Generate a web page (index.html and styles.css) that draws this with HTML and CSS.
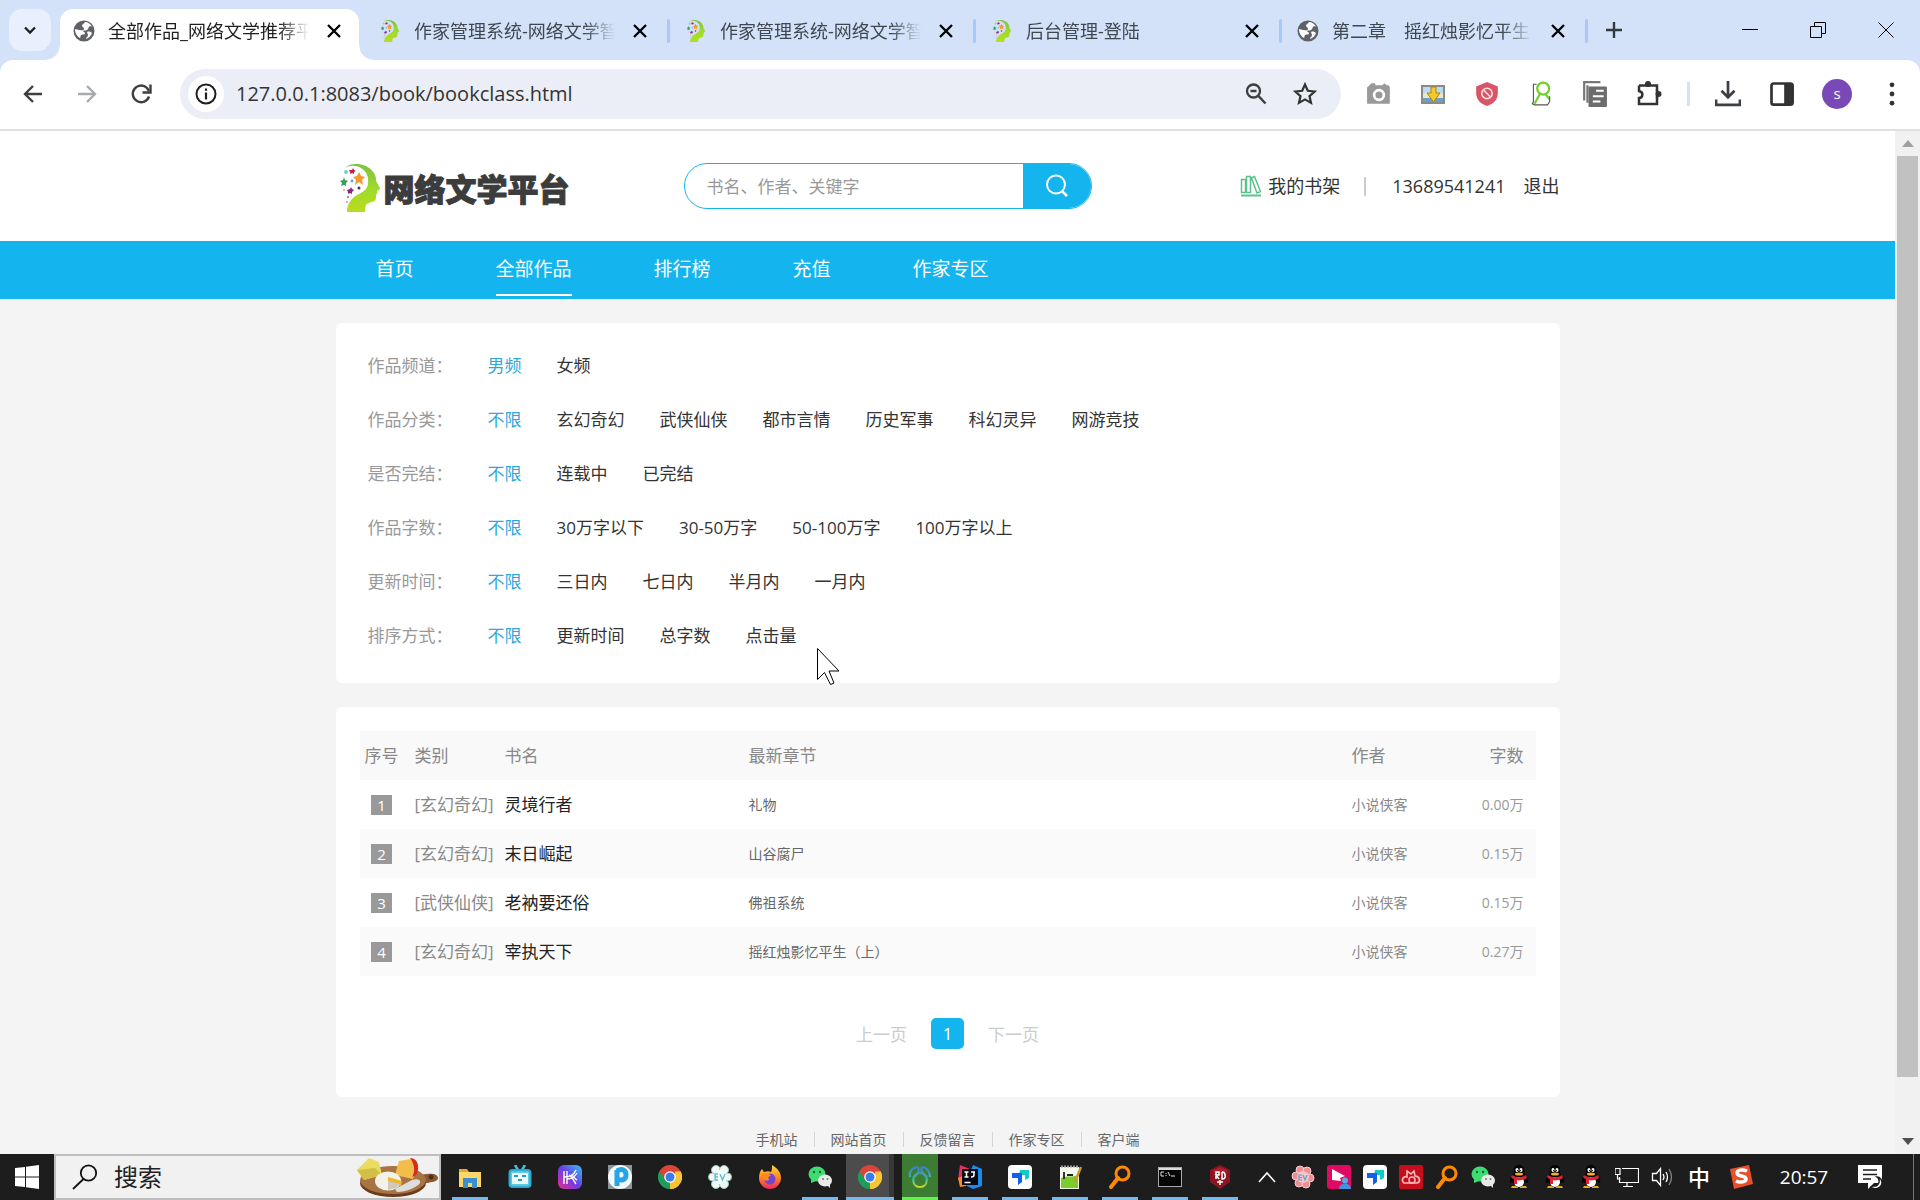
FILE: index.html
```html
<!DOCTYPE html>
<html lang="zh-CN">
<head>
<meta charset="utf-8">
<title>全部作品_网络文学推荐平台</title>
<link rel="stylesheet" href="styles.css">
</head>
<body>
<svg class="defs" aria-hidden="true">
  <defs>
    <linearGradient id="green" x1="0" y1="0" x2="0" y2="1"><stop offset="0" stop-color="#7cc243"/><stop offset=".5" stop-color="#9ddb2c"/><stop offset="1" stop-color="#b9dc1c"/></linearGradient>
    <linearGradient id="kgrad" x1="0" y1="1" x2="1" y2="0"><stop offset="0" stop-color="#ee2a8c"/><stop offset=".5" stop-color="#6a3fe8"/><stop offset="1" stop-color="#2fc4f5"/></linearGradient>
    <linearGradient id="fire" x1="0" y1="0" x2="0" y2="1"><stop offset="0" stop-color="#ffd93b"/><stop offset=".5" stop-color="#ff8a1e"/><stop offset="1" stop-color="#f0265f"/></linearGradient>
    <linearGradient id="knot" x1="0" y1="0" x2="0" y2="1"><stop offset="0" stop-color="#3f7fd0"/><stop offset=".6" stop-color="#3cb8a0"/><stop offset="1" stop-color="#c5d92e"/></linearGradient>
  </defs>
  <symbol id="head" viewBox="0 0 40 48">
    <path fill="url(#green)" d="M5 4C9 0 14 0 18 0c8 1 16 5 18 14v3l4 7c0 2-2 2-3 3 0 2 0 3-1 4 0 4 0 6-4 7-3 1-5 1-6 3-1 2-1 4-1 7H7c0-6 2-10 7-15 6-4 13-6 14-13 1-8-2-13-7-16C16 1 10 1 5 4z"/>
    <path fill="#f29a2e" d="M19 8l2 4 4 1-3 3 1 5-4-3-4 3 1-5-3-3 4-1z"/>
    <path fill="#37a05c" d="M4 13l1 3 3 1-2 2v3l-2-1-3 1 1-3-2-2 3-1z"/>
    <path fill="#c02548" d="M13 4l1 2 2 1-2 1v2l-2-1-2 1v-2l-1-2 3 0z"/>
    <path fill="#8d2386" d="M11 23l1 2 2 1-2 2v2l-2-1-2 1v-2l-1-2 3-1z"/>
    <circle cx="6" cy="8" r="2" fill="#66d4d4"/><circle cx="19" cy="24" r="1.500" fill="#4a3b45"/><circle cx="12" cy="17" r="1.400" fill="#59a8dc"/><circle cx="4" cy="26" r="1" fill="#e8a060"/><circle cx="8" cy="33" r="1" fill="#d04a68"/><circle cx="7" cy="38" r="1" fill="#e88"/>
  </symbol>
  <symbol id="globe" viewBox="0 0 22 22">
    <circle cx="11" cy="11" r="10.500" fill="#5f6368"/>
    <path fill="#fff" d="M12 2c-1 2-3 2-3 4 0 1 2 1 2 3 0 2-3 1-5 1-1 0-3-1-4-1 0 5 3 8 5 9 1-1 0-2 1-3 2-1 4 0 4-2 0-1-2-1-2-2 1-1 4 0 5-2 1-1 0-2 2-3 1 0 2 1 2 1-1-3-4-5-7-5z"/>
    <path fill="#fff" d="M14 12c2-1 4 0 5 1-1 3-3 5-6 6 0-2 2-2 2-4 0-1-1-2-1-3z"/>
  </symbol>
  <symbol id="close" viewBox="0 0 24 24"><path d="M6 6l12 12M18 6L6 18" fill="none" stroke="currentColor" stroke-width="2.300"/></symbol>
  <symbol id="chrome" viewBox="0 0 24 24">
    <path fill="#db4437" d="M12 12L1.600 6A12 12 0 0 1 22.400 6z"/><path fill="#f9c534" d="M12 12L22.400 6A12 12 0 0 1 12 24z"/><path fill="#1c9e5a" d="M12 12V24A12 12 0 0 1 1.600 6z"/>
    <path fill="#db4437" d="M1.600 6l5 8L12 6.500h10.600L22.400 6z"/><path fill="#f9c534" d="M12 24l5.500-9L17 6.500h5.600A12 12 0 0 1 12 24z"/>
    <circle cx="12" cy="12" r="5.800" fill="#fff"/><circle cx="12" cy="12" r="4.500" fill="#3b7de8"/>
  </symbol>
  <symbol id="wechat" viewBox="0 0 24 24">
    <ellipse cx="9" cy="9" rx="8.500" ry="7.500" fill="#3fdc73"/><path fill="#3fdc73" d="M3 14l0 4 5-2z"/><circle cx="6" cy="7" r="1.200" fill="#146c35"/><circle cx="12" cy="7" r="1.200" fill="#146c35"/>
    <ellipse cx="17" cy="15.500" rx="7" ry="6" fill="#e9e9e9"/><path fill="#e9e9e9" d="M19 20l3 3 0-5z"/><circle cx="15" cy="14" r="1" fill="#777"/><circle cx="19.500" cy="14" r="1" fill="#777"/>
  </symbol>
  <symbol id="tdoc" viewBox="0 0 24 24">
    <rect width="24" height="24" rx="4" fill="#fff"/><path fill="#15c9c4" d="M12 5h9v8l-4 2v-5h-6z"/><path fill="#1260f0" d="M4 8h10v9l-4 3v-7H4z"/>
  </symbol>
  <symbol id="finder" viewBox="0 0 24 24"><circle cx="14.500" cy="8.500" r="6.500" fill="none" stroke="#ff8a00" stroke-width="3"/><path d="M10 13l-7 9" stroke="#ff8a00" stroke-width="4" stroke-linecap="round"/></symbol>
  <symbol id="penguin" viewBox="0 0 24 24">
    <path fill="#f2a51c" d="M5 21h6v2H4zM13 21h6l1 2h-7z"/><path fill="#050505" d="M12 0c-4 0-6 3-5 8-3 3-5 7-4 10l3-1c1 3 3 5 6 5s5-2 6-5l3 1c1-3-1-7-4-10 1-5-1-8-5-8z"/>
    <ellipse cx="12" cy="17" rx="5" ry="5" fill="#fff"/><path fill="#df2334" d="M5 10c5 3 9 3 14 0l1 3c-3 2-8 3-10 2v4H7v-5c-1 0-2-1-3-2z"/><ellipse cx="10" cy="5" rx="1.500" ry="2" fill="#fff"/><ellipse cx="14" cy="5" rx="1.500" ry="2" fill="#fff"/><circle cx="10.500" cy="5.500" r=".6"/><circle cx="13.500" cy="5.500" r=".6"/><ellipse cx="12" cy="9" rx="4" ry="1.500" fill="#f6ae20"/>
  </symbol>
</svg>

<header class="browser">
  <div class="tabstrip">
    <button class="tab-search" aria-label="搜索标签页"><svg width="16" height="16" viewBox="0 0 16 16"><path d="M3 5.500l5 5 5-5" fill="none" stroke="#1f1f1f" stroke-width="2.300"/></svg></button>
    <div class="tab active"><svg class="favicon"><use href="#globe"/></svg><span class="tab-title">全部作品_网络文学推荐平台</span><button class="tab-close" aria-label="关闭"><svg><use href="#close"/></svg></button></div>
    <span class="tab-sep hidden"></span>
    <div class="tab"><svg class="favicon"><use href="#head"/></svg><span class="tab-title">作家管理系统-网络文学智能平台</span><button class="tab-close" aria-label="关闭"><svg><use href="#close"/></svg></button></div>
    <span class="tab-sep"></span>
    <div class="tab"><svg class="favicon"><use href="#head"/></svg><span class="tab-title">作家管理系统-网络文学智能平台</span><button class="tab-close" aria-label="关闭"><svg><use href="#close"/></svg></button></div>
    <span class="tab-sep"></span>
    <div class="tab"><svg class="favicon"><use href="#head"/></svg><span class="tab-title">后台管理-登陆</span><button class="tab-close" aria-label="关闭"><svg><use href="#close"/></svg></button></div>
    <span class="tab-sep"></span>
    <div class="tab"><svg class="favicon"><use href="#globe"/></svg><span class="tab-title">第二章　摇红烛影忆平生</span><button class="tab-close" aria-label="关闭"><svg><use href="#close"/></svg></button></div>
    <span class="tab-sep"></span>
    <button class="new-tab" aria-label="新标签页"><svg width="18" height="18" viewBox="0 0 18 18"><path d="M9 1v16M1 9h16" stroke="#333b40" stroke-width="2.400"/></svg></button>
    <div class="window-controls">
      <button aria-label="最小化"><svg width="16" height="16" viewBox="0 0 16 16"><path d="M0 7.500h16" stroke="#000"/></svg></button>
      <button aria-label="还原"><svg width="16" height="16" viewBox="0 0 16 16"><path d="M.5 4.500h11v11H.5zM4.500 4V.5h11v11H12" fill="none" stroke="#000"/></svg></button>
      <button aria-label="关闭窗口"><svg width="16" height="16" viewBox="0 0 16 16"><path d="M.5.5l15 15M15.500.5l-15 15" stroke="#000"/></svg></button>
    </div>
  </div>
  <div class="toolbar">
    <div class="nav-buttons">
      <button aria-label="后退"><svg width="24" height="24" viewBox="0 0 24 24"><path d="M21 12H5M12 4l-8 8 8 8" fill="none" stroke="#3c4043" stroke-width="2.400"/></svg></button>
      <button aria-label="前进"><svg width="24" height="24" viewBox="0 0 24 24"><path d="M3 12h16M12 4l8 8-8 8" fill="none" stroke="#a8abae" stroke-width="2.400"/></svg></button>
      <button aria-label="重新加载"><svg width="24" height="24" viewBox="0 0 24 24"><path d="M20 14.500A8.300 8.300 0 1 1 18 6l2 3" fill="none" stroke="#3c4043" stroke-width="2.400"/><path d="M21.500 2.500v8h-8" fill="none" stroke="#3c4043" stroke-width="2.400"/></svg></button>
    </div>
    <div class="address">
      <span class="site-info"><svg width="22" height="22" viewBox="0 0 22 22"><circle cx="11" cy="11" r="9.500" fill="none" stroke="#1f1f1f" stroke-width="2"/><path d="M11 9.500v7M11 5.500v2.300" stroke="#1f1f1f" stroke-width="2.200"/></svg></span>
      <input class="url" aria-label="地址" value="127.0.0.1:8083/book/bookclass.html">
      <svg width="24" height="24" viewBox="0 0 24 24"><circle cx="9.500" cy="9" r="6.500" fill="none" stroke="#3c4043" stroke-width="2.300"/><path d="M14.500 14l7 7.500M6.500 9h6" stroke="#3c4043" stroke-width="2.500"/></svg>
      <svg width="26" height="26" viewBox="0 0 26 26"><path d="M13 3.500l2.800 6.300 6.800.7-5.100 4.600 1.500 6.800-6-3.500-6 3.500 1.500-6.800-5.100-4.600 6.800-.7z" fill="none" stroke="#333" stroke-width="2.200"/></svg>
    </div>
    <div class="extensions">
      <svg viewBox="0 0 24 24"><path fill="#999" d="M2 5l3-3h3l1 2h6l2-2 2 2h2l1 2v15H1V6z"/><circle cx="12" cy="13" r="4.500" fill="#999" stroke="#fff" stroke-width="2.500"/></svg>
      <svg viewBox="0 0 26 24"><rect x="1" y="3" width="24" height="19" fill="#8a8a86"/><rect x="3" y="5" width="20" height="15" fill="#b9dcf0"/><path fill="#ece7bd" d="M3 12c5-3 13 1 20-1v9H3z"/><path fill="#6aa0cc" d="M3 16h20v4H3z"/><path fill="#f3c92b" stroke="#a98512" d="M11 5h5v6h4l-6.500 9L7 11h4z"/></svg>
      <svg viewBox="0 0 24 24"><path fill="#d95565" d="M12 1l10 4v6c0 6-4 10-10 12C6 21 2 17 2 11V5z"/><circle cx="12" cy="11.500" r="4.800" fill="none" stroke="#fbdfe2" stroke-width="1.500"/><path d="M9 8.500l6 6" stroke="#fbdfe2" stroke-width="1.500"/></svg>
      <svg viewBox="0 0 24 24"><circle cx="14" cy="7" r="5.500" fill="none" stroke="#6fce28" stroke-width="2"/><path d="M11 12l-5 9M16 12l4 5" fill="none" stroke="#6fce28" stroke-width="2"/><path d="M8 3H5v16l-1 2 2 1h12l2-3v-5" fill="none" stroke="#555"/></svg>
      <svg viewBox="0 0 24 24"><path fill="none" stroke="#777" stroke-width="2" d="M2 18V1h15M5 20V4"/><rect x="6" y="5" width="17" height="19" rx="1" fill="#6c6c6c"/><path d="M13 9h7M10 14h10M10 19h7" stroke="#fff" stroke-width="1.800"/></svg>
      <svg viewBox="0 0 26 26"><path fill="none" stroke="#333" stroke-width="2.500" d="M3 4.500h18v5.500M21 16v7H3v-6c4 0 5-6 0-7V4.500"/><path d="M21 9v8" stroke="#333" stroke-width="2.500"/><circle cx="12" cy="3" r="3" fill="#333"/><circle cx="22.500" cy="13" r="3" fill="#333"/></svg>
      <i class="toolbar-sep"></i>
      <svg viewBox="0 0 24 24"><path fill="none" stroke="#3c4043" stroke-width="2.500" d="M12 0v14M6 9l6 6 6-6M1 17v5h22v-5"/></svg>
      <svg viewBox="0 0 24 24"><rect x="2.300" y="2.300" width="19.500" height="19.500" rx="2" fill="none" stroke="#333" stroke-width="2.500"/><path fill="#333" d="M14 2h8v20h-8z"/></svg>
      <span class="avatar">s</span>
      <svg viewBox="0 0 24 24" fill="#333"><circle cx="12" cy="3.500" r="2.200"/><circle cx="12" cy="12" r="2.200"/><circle cx="12" cy="20.500" r="2.200"/></svg>
    </div>
  </div>
</header>

<div class="viewport">
  <div class="site">
    <div class="site-header">
      <div class="container header-row">
        <a class="logo" href="#"><svg class="logo-mark"><use href="#head"/></svg><span>网络文学平台</span></a>
        <form class="search">
          <input type="text" aria-label="搜索" placeholder="书名、作者、关键字">
          <button type="button" aria-label="搜索"><svg width="24" height="24" viewBox="0 0 24 24"><circle cx="11" cy="10.500" r="9" fill="none" stroke="#fff" stroke-width="2"/><path d="M17 17l5 5" stroke="#fff" stroke-width="2.500"/></svg></button>
        </form>
        <div class="user">
          <a class="shelf" href="#"><svg width="22" height="22" viewBox="0 0 22 22"><path fill="none" stroke="#5cc08a" stroke-width="1.500" d="M1.500 4.500h4v13h-4zM6.500 1.500h4v16h-4zM11.500 3l3-1.500 6 15-3.500 1.500z"/><path fill="none" stroke="#5cc08a" stroke-width="2" d="M1 20.500h20"/></svg>我的书架</a>
          <i class="user-sep"></i>
          <a href="#">13689541241</a>
          <a href="#">退出</a>
        </div>
      </div>
    </div>
    <nav class="site-nav">
      <div class="container nav-row">
        <a href="#">首页</a><a href="#" class="current">全部作品</a><a href="#">排行榜</a><a href="#">充值</a><a href="#">作家专区</a>
      </div>
    </nav>
    <main class="container">
      <section class="card filters">
        <dl><dt>作品频道：</dt><dd><a class="on" href="#">男频</a><a href="#">女频</a></dd></dl>
        <dl><dt>作品分类：</dt><dd><a class="on" href="#">不限</a><a href="#">玄幻奇幻</a><a href="#">武侠仙侠</a><a href="#">都市言情</a><a href="#">历史军事</a><a href="#">科幻灵异</a><a href="#">网游竞技</a></dd></dl>
        <dl><dt>是否完结：</dt><dd><a class="on" href="#">不限</a><a href="#">连载中</a><a href="#">已完结</a></dd></dl>
        <dl><dt>作品字数：</dt><dd><a class="on" href="#">不限</a><a href="#">30万字以下</a><a href="#">30-50万字</a><a href="#">50-100万字</a><a href="#">100万字以上</a></dd></dl>
        <dl><dt>更新时间：</dt><dd><a class="on" href="#">不限</a><a href="#">三日内</a><a href="#">七日内</a><a href="#">半月内</a><a href="#">一月内</a></dd></dl>
        <dl><dt>排序方式：</dt><dd><a class="on" href="#">不限</a><a href="#">更新时间</a><a href="#">总字数</a><a href="#">点击量</a></dd></dl>
      </section>
      <section class="card list">
        <table>
          <colgroup><col class="c-rank"><col class="c-type"><col class="c-name"><col><col class="c-author"><col class="c-count"></colgroup>
          <thead><tr><th class="rank">序号</th><th>类别</th><th>书名</th><th>最新章节</th><th>作者</th><th class="count">字数</th></tr></thead>
          <tbody>
            <tr><td class="rank"><b>1</b></td><td class="type"><a href="#">[玄幻奇幻]</a></td><td class="name"><a href="#">灵境行者</a></td><td class="chapter"><a href="#">礼物</a></td><td class="author"><a href="#">小说侠客</a></td><td class="count">0.00万</td></tr>
            <tr><td class="rank"><b>2</b></td><td class="type"><a href="#">[玄幻奇幻]</a></td><td class="name"><a href="#">末日崛起</a></td><td class="chapter"><a href="#">山谷腐尸</a></td><td class="author"><a href="#">小说侠客</a></td><td class="count">0.15万</td></tr>
            <tr><td class="rank"><b>3</b></td><td class="type"><a href="#">[武侠仙侠]</a></td><td class="name"><a href="#">老衲要还俗</a></td><td class="chapter"><a href="#">佛祖系统</a></td><td class="author"><a href="#">小说侠客</a></td><td class="count">0.15万</td></tr>
            <tr><td class="rank"><b>4</b></td><td class="type"><a href="#">[玄幻奇幻]</a></td><td class="name"><a href="#">宰执天下</a></td><td class="chapter"><a href="#">摇红烛影忆平生（上）</a></td><td class="author"><a href="#">小说侠客</a></td><td class="count">0.27万</td></tr>
          </tbody>
        </table>
        <div class="pager"><a href="#">上一页</a><b>1</b><a href="#">下一页</a></div>
      </section>
    </main>
    <footer class="site-footer"><a href="#">手机站</a><i></i><a href="#">网站首页</a><i></i><a href="#">反馈留言</a><i></i><a href="#">作家专区</a><i></i><a href="#">客户端</a></footer>
  </div>
  <div class="scrollbar"><span class="arrow up"></span><span class="thumb"></span><span class="rest"></span><span class="arrow down"></span></div>
</div>

<div class="taskbar">
  <button class="start" aria-label="开始"><svg width="24" height="24" viewBox="0 0 24 24" fill="#fff"><path d="M0 3l10-1v9.500H0zM11 1.800L24 0v11.500H11zM0 12.500h10V22L0 21zM11 12.500h13V24l-13-1.800z"/></svg></button>
  <label class="task-search">
    <svg width="26" height="26" viewBox="0 0 26 26"><circle cx="16.500" cy="9" r="7.700" fill="none" stroke="#111" stroke-width="1.800"/><path d="M11.500 15L1 25" stroke="#111" stroke-width="1.800"/></svg>
    <input type="text" aria-label="搜索" placeholder="搜索">
    <svg width="81" height="39" viewBox="0 0 81 39"><path fill="#8a5a33" d="M60 17l10-1c5-1 11 0 11 4s-7 4-11 5l-6 1z"/><ellipse cx="36" cy="25" rx="33" ry="14" fill="#6a3d1e"/><ellipse cx="36" cy="22" rx="33" ry="14" fill="#a87444"/><circle cx="74" cy="19" r="2.500" fill="#53301a"/><path fill="#eadb62" d="M0 12L12 0l10 4 3 13-18 5z"/><path fill="#d3bf45" d="M0 12l18-2 7 7-18 5z"/><path fill="#f3bd4c" d="M42 3l12-2 7 5-5 15-18-4z"/><path fill="#d42c1d" d="M53 0c9 0 10 12 6 17l-4 2c4-6 2-14-2-19z"/><ellipse cx="31" cy="23" rx="13" ry="9.500" fill="#f4f1e8"/><path fill="#eab92c" d="M31 19l14 4-1 5-13-3z"/><path fill="#cfc8bc" d="M31 23v9l8-2 4-4z"/><path fill="#ddd" d="M38 31l17-9c6-2 9 0 8 3-2 4-14 9-23 9z"/></svg>
  </label>
  <div class="apps">
    <button aria-label="文件资源管理器" class="run"><svg viewBox="0 0 24 24"><path fill="#e6a92a" d="M1 4h8l2 3h12v4H1z"/><path fill="#fbd668" d="M1 7h22v15H1z"/><path fill="#3b8ed0" d="M5 13h14v10h-5v-5h-4v5H5z"/></svg></button>
    <button aria-label="视频"><svg viewBox="0 0 24 24"><path d="M7 0l3 5M17 0l-3 5" stroke="#46bfdf" stroke-width="2.500"/><rect x="1.500" y="5" width="21" height="17" rx="3" fill="#5ec9e4" stroke="#2ba8cd" stroke-width="2"/><rect x="4" y="8" width="16" height="11" rx="1" fill="#eafaff"/><path d="M6 11h4M14 11h4M10 15h4" stroke="#2b9cc0" stroke-width="1.800"/></svg></button>
    <button aria-label="K"><svg viewBox="0 0 24 24"><rect width="24" height="24" rx="6" fill="url(#kgrad)"/><path d="M6 6v13M9 6v13M18 5c-2 5-7 7-12 7M19 8c-3 5-6 6-10 6M11 10c3 1 4 5 7 9M14 10c2 2 3 4 5 5" fill="none" stroke="#fff" stroke-width="1.400"/></svg></button>
    <button aria-label="P"><svg viewBox="0 0 24 24"><rect width="24" height="24" fill="#8d959b"/><circle cx="12" cy="12" r="12" fill="#f2fbff"/><path d="M9 21V5M9 6c5-3 9-1 9 4s-5 6-8 4" fill="none" stroke="#23a5e8" stroke-width="5"/></svg></button>
    <button aria-label="Chrome"><svg><use href="#chrome"/></svg></button>
    <button aria-label="EV"><svg viewBox="0 0 24 24"><g fill="#eef8f5" stroke="#9bc7b5"><circle cx="8" cy="5" r="4.500"/><circle cx="16" cy="5" r="4.500"/><circle cx="4.500" cy="12" r="4"/><circle cx="19.500" cy="12" r="4"/><circle cx="8" cy="19" r="4.500"/><circle cx="16" cy="19" r="4.500"/></g><circle cx="12" cy="12" r="7" fill="#f7fffc"/><path d="M10 9H7v6h3M7 12h3M12 9l2.500 6L17 9" fill="none" stroke="#5db7d0" stroke-width="1.300"/></svg></button>
    <button aria-label="Firefox"><svg viewBox="0 0 24 24"><path fill="url(#fire)" d="M14 0c5 3 9 7 9 13A11 11 0 0 1 1 13C1 9 2 6 4 4l2 3c3-1 5-1 7 0 1-2 1-4 1-7z"/><circle cx="12" cy="14" r="5.500" fill="#7544cf"/><path fill="#ff8a1e" d="M4 9c4-2 7-1 9 2-3 0-3 2-2 4-4 2-7-2-7-6z"/></svg></button>
    <button aria-label="微信" class="run"><svg><use href="#wechat"/></svg></button>
    <button aria-label="Chrome" class="run current"><svg><use href="#chrome"/></svg></button>
    <button aria-label="Navicat" class="alert"><svg viewBox="0 0 24 24"><path fill="none" stroke="url(#knot)" stroke-width="2.200" d="M10 2C4 2 1 7 2 12M10 2c2 3 0 7-4 10M14 2c4 0 8 4 8 10M14 2c-2 3 1 7 5 10M12 8c-9 0-9 14 0 14s9-14 0-14z"/></svg></button>
    <button aria-label="IntelliJ IDEA" class="run"><svg viewBox="0 0 24 24"><path fill="#e72d68" d="M2 0l10 4-4 9-8 2z"/><path fill="#f68a2c" d="M0 13l8-3v11l-6 1z"/><path fill="#1a8cf0" d="M15 0l9 4v17l-9 3-8-4z"/><rect x="4" y="4" width="16" height="16" fill="#0a0a12"/><path d="M6.500 7h4M8.500 7v5M6.500 12h4M13 7h4M16 7v3q0 2-3 2M6.500 17.500h6" fill="none" stroke="#fff" stroke-width="1.500"/></svg></button>
    <button aria-label="腾讯文档" class="run"><svg><use href="#tdoc"/></svg></button>
    <button aria-label="记事本" class="run"><svg viewBox="0 0 24 24"><rect x="2" y="2" width="19" height="22" fill="#f4f7ea"/><path fill="#7bcc2c" d="M3 13c6-3 11 0 17-3v13H3z"/><path d="M3 1.500h17" stroke="#999" stroke-width="2" stroke-dasharray="2 1"/><path d="M6 7v7M9 10h6" stroke="#222" stroke-width="1.800"/><path d="M23 2l-6 15" stroke="#c99a2e" stroke-width="2.500"/></svg></button>
    <button aria-label="Everything" class="run"><svg><use href="#finder"/></svg></button>
    <button aria-label="命令提示符" class="run"><svg viewBox="0 0 24 24"><rect x=".5" y="2.500" width="23" height="19" fill="#050505" stroke="#aaa"/><path d="M1 4h22" stroke="#ddd" stroke-width="2"/><path d="M6 7H3v4h3M8 8v1M8 10v1M10 7l2 4M13 11h4" fill="none" stroke="#ddd"/></svg></button>
    <button aria-label="RD" class="run"><svg viewBox="0 0 24 24"><path fill="#8c1420" d="M12 0l10 5v12l-10 7-10-7V5z"/><path fill="#b51e2c" d="M12 2l8 4-8 4-8-4z"/><path d="M8 14V7h3v3H8l3 4M14 7v7q4 0 3-4 0-3-3-3M12 15v5M9 17h6" fill="none" stroke="#fff" stroke-width="1.500"/></svg></button>
  </div>
  <div class="tray">
    <svg viewBox="0 0 24 24"><path d="M4 17l8-9 8 9" fill="none" stroke="#fff" stroke-width="1.600"/></svg>
    <svg viewBox="0 0 24 24"><g fill="#f08d90" stroke="#f8cdcc"><circle cx="9" cy="5" r="4"/><circle cx="16" cy="6" r="4"/><circle cx="5" cy="11" r="4"/><circle cx="19" cy="13" r="4"/><circle cx="8" cy="18" r="4"/><circle cx="15" cy="19" r="4"/></g><circle cx="12" cy="12" r="6" fill="#f5c6c8"/><path d="M11 10H8v5h3M8 12.500h3M12 10l2 5 2-5" fill="none" stroke="#5aa3cf" stroke-width="1.200"/></svg>
    <svg viewBox="0 0 24 24"><rect width="24" height="24" rx="3" fill="#df0b63"/><path fill="#fff" d="M5 4l13 7-5 2 1 3-9-1z"/><circle cx="18" cy="15.500" r="3" fill="#55a9e8"/><path fill="#3f94db" d="M12 24c0-7 12-7 12 0z"/></svg>
    <svg><use href="#tdoc"/></svg>
    <svg viewBox="0 0 24 24"><rect width="24" height="24" rx="2" fill="#c60d1b"/><path d="M4 17c-2-4 2-6 4-5V6l4 3 3-3 1 5c5 0 6 6 2 7H5z" fill="none" stroke="#ffb8b8" stroke-width="1.600"/><circle cx="13" cy="15" r="3" fill="none" stroke="#ffb8b8" stroke-width="1.500"/></svg>
    <svg><use href="#finder"/></svg>
    <svg><use href="#wechat"/></svg>
    <svg><use href="#penguin"/></svg>
    <svg><use href="#penguin"/></svg>
    <svg><use href="#penguin"/></svg>
    <svg viewBox="0 0 24 24"><path d="M7 3.500h16.500v14H4.500V12M0 3.500h5v6H0zM2.500 10v4h3M12 18v3M8 21.500h10" fill="none" stroke="#fff" stroke-width="1.200"/></svg>
    <svg viewBox="0 0 24 24"><path d="M1.500 8.500h4l4-5v17l-4-5h-4zM12 9q2 3 0 6M15 7q3 5 0 10" fill="none" stroke="#fff" stroke-width="1.300"/><path d="M18 4q5 8 0 16" fill="none" stroke="#888" stroke-width="1.300"/></svg>
    <span class="ime">中</span>
    <svg class="sogou" viewBox="0 0 24 24"><path fill="#e8502b" d="M1 4l19-4 4 19-19 5z"/><path d="M18 6c-5-2-10-1-10 2 0 4 9 2 9 6 0 3-6 4-10 2" fill="none" stroke="#fff" stroke-width="3.500"/></svg>
    <time>20:57</time>
    <svg class="notice" viewBox="0 0 24 24"><path fill="#fff" d="M0 0h24v18h-8l-6 6v-6H0z"/><path d="M5 5h14M5 9.500h14M5 14h8" stroke="#1d1d1d" stroke-width="1.500"/><path fill="#fff" stroke="#1d1d1d" stroke-width="1.500" d="M19 12c4 3 2 10-4 9l-2 1c3 3 10 2 11-4 0-3-2-6-5-6z"/></svg>
    <i class="show-desktop"></i>
  </div>
</div>
<svg class="cursor" width="24" height="38" viewBox="0 0 24 38"><path d="M.5.500v31l7-7 6 12 3.500-1.500-5-12h10z" fill="#fff" stroke="#000"/></svg>
</body>
</html>
```
FILE: styles.css
```css
* { box-sizing: border-box; }
html, body { height: 100%; }
body {
  margin: 0;
  display: grid;
  grid-template-rows: auto minmax(0, 1fr) auto;
  overflow: hidden;
  font-family: "Open Sans", "Noto Sans CJK SC", sans-serif;
  font-size: 17px;
  color: #333;
}
a { color: inherit; text-decoration: none; }
button { border: 0; padding: 0; background: none; display: flex; align-items: center; justify-content: center; }
input { border: 0; outline: 0; background: none; font: inherit; min-width: 0; }
svg { flex: none; display: block; }
.defs { position: absolute; width: 0; height: 0; }

/* browser frame */
.browser { background: #d3e2f9; }
.tabstrip { display: flex; height: 60px; padding: 9px 9px 0; }
.tab-search { width: 42px; height: 42px; margin-right: 9px; border-radius: 13px; background: #e8f0fd; }
.tab {
  flex: 0 1 299px;
  min-width: 0;
  display: flex;
  align-items: center;
  gap: 13px;
  padding: 0 13px 8px;
  position: relative;
  color: #3f4750;
}
.tab.active { background: #fff; border-radius: 13px 13px 0 0; color: #1f1f1f; }
.tab.active::before, .tab.active::after {
  content: "";
  position: absolute;
  bottom: 0;
  width: 14px;
  height: 14px;
}
.tab.active::before { left: -14px; background: radial-gradient(circle at 0 0, #d3e2f9 13px, #fff 14px); }
.tab.active::after { right: -14px; background: radial-gradient(circle at 100% 0, #d3e2f9 13px, #fff 14px); }
.favicon { width: 22px; height: 22px; }
.tab-title {
  flex: 1;
  overflow: hidden;
  white-space: nowrap;
  font-size: 18px;
  line-height: 26px;
  mask-image: linear-gradient(to right, #000 calc(100% - 30px), transparent);
}
.tab-close, .tab-close svg { width: 24px; height: 24px; }
.tab-sep { width: 3px; height: 24px; margin: 10px 2px 0; background: #a8c7fa; border-radius: 2px; }
.tab-sep.hidden { background: none; }
.new-tab { width: 42px; height: 42px; margin-left: 3px; }
.window-controls { display: flex; margin-left: auto; }
.window-controls button { width: 68px; height: 42px; }
.window-controls button:last-child { width: 50px; padding-left: 0; margin-left: 9px; }
.toolbar {
  display: flex;
  align-items: center;
  height: 71px;
  padding: 0 15px 2px 6px;
  background: #fff;
  border-radius: 13px 13px 0 0;
  border-bottom: 2px solid #dfe0e2;
}
.nav-buttons { display: flex; margin-right: 12px; }
.nav-buttons button { width: 54px; height: 50px; }
.address {
  flex: 1;
  display: flex;
  align-items: center;
  height: 50px;
  padding: 0 23px 0 8px;
  gap: 24px;
  border-radius: 25px;
  background: #ebeef6;
}
.site-info { display: flex; align-items: center; justify-content: center; width: 36px; height: 36px; border-radius: 50%; background: #fff; }
.url { flex: 1; margin-left: -12px; padding: 0; font-size: 20px; color: #333; }
.extensions { display: flex; align-items: center; margin-left: 25px; gap: 28px; }
.extensions svg { width: 26px; height: 26px; }
.toolbar-sep { width: 3px; height: 24px; margin: 0 -3px; background: #d3e2f9; }
.avatar { width: 30px; height: 30px; margin: 0 -1px; border-radius: 50%; background: #7a49b8; color: #fff; font-size: 15px; line-height: 28px; text-align: center; }

/* page */
.viewport { display: flex; overflow: hidden; background: #f4f4f4; }
.site { flex: 1; min-width: 0; }
.container { width: calc(100% - 48px); max-width: 1224px; margin: 0 auto; }
.site-header { background: #fff; }
.header-row { display: flex; align-items: center; height: 110px; }
.logo { display: flex; align-items: center; gap: 4px; width: 348px; padding: 4px 0 0 4px; color: #3c3c3c; font-size: 31px; font-weight: 900; line-height: 48px; font-family: "Noto Sans CJK SC", sans-serif; white-space: nowrap; }
.logo span { -webkit-text-stroke: 1px #3c3c3c; }
.logo-mark { width: 40px; height: 48px; }
.search { display: flex; width: 408px; height: 46px; border: 1px solid #14b4ef; border-radius: 23px; overflow: hidden; }
.search input { flex: 1; padding: 0 22px; }
.search input::placeholder { color: #999; opacity: 1; }
.search button { width: 68px; background: #14b4ef; }
.user { display: flex; align-items: center; margin-left: auto; font-size: 18px; line-height: 26px; }
.shelf { display: flex; align-items: center; gap: 6px; }
.user-sep { width: 2px; height: 19px; margin: 0 26px 0 24px; background: #ccc; }
.user a:last-child { margin-left: 18px; }
.site-nav { background: #14b4ef; }
.nav-row { display: flex; gap: 82px; height: 58px; padding: 0 40px; color: #fff; font-size: 19px; }
.nav-row a { height: 55px; line-height: 56px; border-bottom: 2px solid transparent; }
.nav-row .current { border-color: #fff; }
.card { background: #fff; border-radius: 6px; margin-top: 24px; }
.filters { padding: 16px 32px 20px; }
.filters dl { display: flex; margin: 0; height: 54px; line-height: 54px; }
.filters dt { width: 120px; color: #999; }
.filters dd { display: flex; gap: 35px; margin: 0; }
.filters .on { color: #2fa7dd; }
.list { padding: 24px; }
table { width: 100%; table-layout: fixed; border-collapse: collapse; }
.c-rank { width: 44px; }
.c-type { width: 90px; }
.c-name { width: 244px; }
.c-author { width: 95px; }
.c-count { width: 100px; }
th, td { height: 49px; padding: 0 0 0 11px; text-align: left; font-weight: 400; white-space: nowrap; line-height: 24px; }
thead tr { background: #f9f9f9; }
tbody tr:nth-child(even) { background: #fafafa; }
th, .type { color: #888; }
.name { color: #222; }
.chapter, .author, td.count { font-size: 14px; }
.chapter { color: #666; }
.author { color: #888; }
td.count { color: #999; }
.count { text-align: right; padding: 0 12px 0 0; }
.rank { text-align: center; padding: 0; }
.rank b { display: block; width: 21px; height: 20px; margin: 0 auto; background: #999; color: #fff; font-size: 15px; font-weight: 400; line-height: 20px; }
.pager { display: flex; justify-content: center; align-items: center; gap: 24px; padding: 42px 0 24px; color: #ccc; }
.pager b { width: 33px; height: 31px; border-radius: 5px; background: #14b4ef; color: #fff; font-weight: 400; line-height: 31px; text-align: center; }
.site-footer { display: flex; justify-content: center; align-items: center; gap: 16px; margin-top: 32px; color: #666; font-size: 14px; line-height: 21px; }
.site-footer i { width: 1px; height: 15px; background: #d5d5d5; }
.scrollbar { display: flex; flex-direction: column; align-items: center; width: 25px; background: #f1f1f1; }
.arrow { height: 25px; display: flex; align-items: center; }
.arrow::before { content: ""; border: 6px solid transparent; }
.up::before { border-top: 0; border-bottom: 7px solid #a0a0a0; }
.down::before { border-bottom: 0; border-top: 7px solid #505050; }
.thumb { flex: 921; width: 21px; background: #c1c1c1; }
.rest { flex: 52; }

/* taskbar */
.taskbar { display: flex; height: 46px; background: #1d1d1d; }
.start { width: 54px; }
.task-search { display: flex; align-items: center; gap: 16px; width: 387px; padding: 0 1px 0 16px; background: #f1f1f1; border: 2px solid #bfbfbf; }
.task-search input { flex: 1; padding: 0; font-size: 24px; line-height: 32px; }
.task-search input::placeholder { color: #222; opacity: 1; }
.apps { display: flex; margin-left: 4px; }
.apps button { width: 50px; height: 46px; position: relative; }
.apps svg, .tray svg { width: 24px; height: 24px; }
.apps .run::after { content: ""; position: absolute; left: 7px; right: 7px; bottom: 0; height: 3px; background: #76b9ed; }
.apps .current { background: linear-gradient(to right, #4c4c4c 43px, #383838 43px) content-box; padding: 0 1px; }
.apps .current::after { left: 1px; right: 1px; }
.apps .alert { background: #3c7d33 content-box; padding: 0 7px; }
.apps .alert::after { content: ""; position: absolute; left: 7px; right: 7px; bottom: 0; height: 3px; background: #5ef24a; }
.tray { display: flex; align-items: center; gap: 12px; margin-left: auto; padding-right: 6px; color: #fff; }
.ime { width: 24px; font-size: 22px; line-height: 44px; text-align: center; font-weight: 500; }
.tray .sogou { margin-left: 6px; }
time { width: 50px; margin-left: 14px; font-size: 19px; text-align: center; }
.tray .notice { margin-left: 17px; }
.show-desktop { width: 1px; height: 46px; margin-left: 19px; background: #777; }

/* mouse pointer, floats over the page */
.cursor { position: absolute; left: 817px; top: 648px; }
```
